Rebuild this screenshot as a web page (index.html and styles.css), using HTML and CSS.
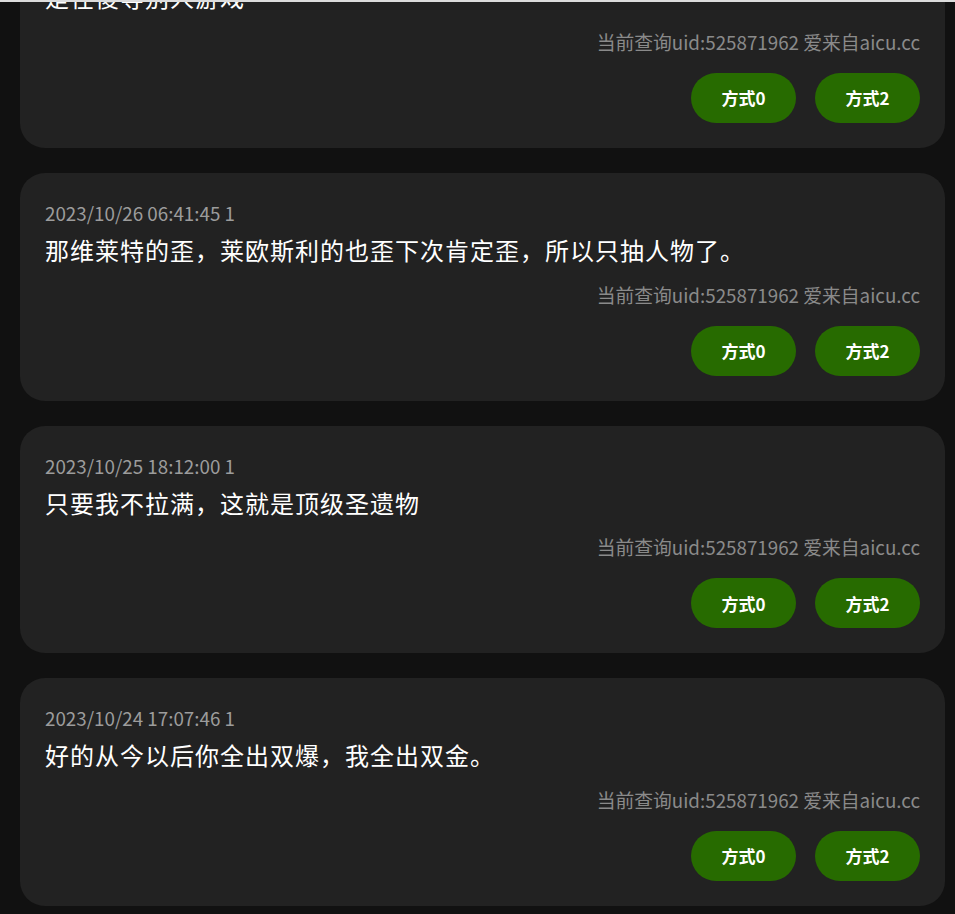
FILE: index.html
```html
<!DOCTYPE html>
<html lang="zh-CN">
<head>
<meta charset="utf-8">
<title>评论列表</title>
<link rel="stylesheet" href="styles.css">
</head>
<body>
<div class="topbar"></div>
<main class="list">
  <article class="card">
    <div class="meta">2023/10/27 12:20:31 1</div>
    <div class="content">是在傻等别人游戏</div>
    <div class="note">当前查询uid:525871962 爱来自aicu.cc</div>
    <div class="actions"><button class="btn">方式0</button><button class="btn">方式2</button></div>
  </article>
  <article class="card">
    <div class="meta">2023/10/26 06:41:45 1</div>
    <div class="content">那维莱特的歪，莱欧斯利的也歪下次肯定歪，所以只抽人物了。</div>
    <div class="note">当前查询uid:525871962 爱来自aicu.cc</div>
    <div class="actions"><button class="btn">方式0</button><button class="btn">方式2</button></div>
  </article>
  <article class="card">
    <div class="meta">2023/10/25 18:12:00 1</div>
    <div class="content">只要我不拉满，这就是顶级圣遗物</div>
    <div class="note">当前查询uid:525871962 爱来自aicu.cc</div>
    <div class="actions"><button class="btn">方式0</button><button class="btn">方式2</button></div>
  </article>
  <article class="card">
    <div class="meta">2023/10/24 17:07:46 1</div>
    <div class="content">好的从今以后你全出双爆，我全出双金。</div>
    <div class="note">当前查询uid:525871962 爱来自aicu.cc</div>
    <div class="actions"><button class="btn">方式0</button><button class="btn">方式2</button></div>
  </article>
  <article class="card">
    <div class="meta">2023/10/23 09:15:12 1</div>
    <div class="content">下次一定</div>
    <div class="note">当前查询uid:525871962 爱来自aicu.cc</div>
    <div class="actions"><button class="btn">方式0</button><button class="btn">方式2</button></div>
  </article>
</main>
<script src="script.js"></script>
</body>
</html>
```
FILE: styles.css
```css
html, body {
  margin: 0;
  padding: 0;
  background: #111111;
  font-family: "Noto Sans CJK SC", "Noto Sans", sans-serif;
}
.topbar {
  position: fixed;
  top: 0;
  left: 0;
  right: 0;
  height: 2px;
  background: #dcdcdc;
  z-index: 10;
}
.list {
  display: flex;
  flex-direction: column;
  gap: 25px;
  padding: 20.33px 10px 20px 20px;
}
.card {
  background: #222222;
  border-radius: 25px;
  padding: 25px;
  display: flex;
  flex-direction: column;
}
.meta {
  font-size: 18.8px;
  line-height: 30px;
  color: #9c9c9c;
}
.content {
  font-size: 24px;
  line-height: 44px;
  color: #ffffff;
  letter-spacing: 1px;
}
.note {
  margin-top: 7.67px;
  font-size: 18.8px;
  line-height: 30px;
  color: #8a8a8a;
  text-align: right;
}
.actions {
  margin-top: 16px;
  display: flex;
  justify-content: flex-end;
  gap: 19px;
}
.btn {
  width: 105px;
  height: 50px;
  border: none;
  border-radius: 25px;
  background: #276b00;
  color: #ffffff;
  font-family: "Noto Sans CJK SC", "Noto Sans", sans-serif;
  font-size: 17px;
  font-weight: 700;
  padding: 0;
}
```
FILE: script.js
```js
window.addEventListener('load', function () {
  window.scrollTo(0, 100);
});
window.scrollTo(0, 100);
```
